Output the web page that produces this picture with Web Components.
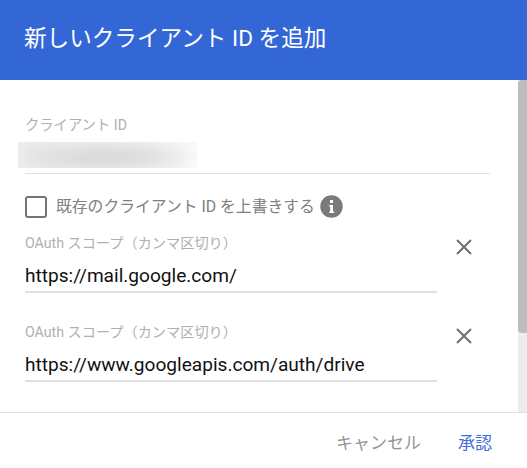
<!DOCTYPE html>
<html lang="ja">
<head>
<meta charset="utf-8">
<title>新しいクライアント ID を追加</title>
<style>
  html, body { margin: 0; height: 100%; background: #fff; }
  body { font-family: Roboto, "Noto Sans CJK JP", sans-serif; overflow: hidden; }
</style>
</head>
<body>
<client-dialog heading="新しいクライアント ID を追加">
  <text-field label="クライアント ID" blurred></text-field>
  <overwrite-check>既存のクライアント ID を上書きする</overwrite-check>
  <scope-row value="https://mail.google.com/"></scope-row>
  <scope-row value="https://www.googleapis.com/auth/drive"></scope-row>
</client-dialog>

<script>
class ClientDialog extends HTMLElement {
  constructor() {
    super();
    this.attachShadow({ mode: 'open' }).innerHTML = `
      <style>
        :host { display: flex; flex-direction: column; width: 527px; height: 468px; }
        header {
          height: 80px;
          flex: none;
          box-sizing: border-box;
          padding: 23px 0 0 24px;
          background: #3367d6;
          color: #fff;
          font-size: 22.6px;
          line-height: 32px;
        }
        .middle { flex: 1; display: flex; min-height: 0; }
        .content { flex: 1; padding: 35px 28px 0 25px; min-width: 0; }
        .track { width: 9px; flex: none; background: #ededed; }
        .thumb { height: 253px; background: #bdbdbd; border-radius: 4px 0 0 4px; }
        footer {
          flex: none;
          height: 56px;
          border-top: 1px solid #e0e0e0;
          display: flex;
          justify-content: flex-end;
          gap: 37px;
          padding: 19px 35px 0 0;
          box-sizing: border-box;
          font-size: 17px;
          line-height: 22px;
        }
        .cancel { color: #949494; }
        .ok { color: #3f6fd8; }
      </style>
      <header></header>
      <div class="middle">
        <div class="content"><slot></slot></div>
        <div class="track"><div class="thumb"></div></div>
      </div>
      <footer>
        <span class="cancel">キャンセル</span>
        <span class="ok">承認</span>
      </footer>`;
  }
  connectedCallback() {
    this.shadowRoot.querySelector('header').textContent = this.getAttribute('heading');
  }
}

class TextField extends HTMLElement {
  constructor() {
    super();
    this.attachShadow({ mode: 'open' }).innerHTML = `
      <style>
        :host { display: block; }
        .label { font-size: 14.3px; line-height: 20px; color: #b0b0b0; }
        .value {
          position: relative;
          height: 26px;
          margin: 7px 0 0 -7px;
          width: 179px;
          overflow: hidden;
          background: linear-gradient(90deg, #ededed, #f1f1f1 70%, #fafafa);
        }
        .smear {
          position: absolute;
          left: 6px; right: 10px; top: 6px; bottom: 2px;
          background: linear-gradient(90deg, #e4e4e4, #d4d4d4 45%, #d8d8d8 70%, #eeeeee);
          border-radius: 10px;
          filter: blur(7px);
        }
        .rule { height: 1px; background: #e0e0e0; margin-top: 5px; }
      </style>
      <div class="label"></div>
      <div class="value"><div class="smear"></div></div>
      <div class="rule"></div>`;
  }
  connectedCallback() {
    this.shadowRoot.querySelector('.label').textContent = this.getAttribute('label');
  }
}

class OverwriteCheck extends HTMLElement {
  constructor() {
    super();
    this.attachShadow({ mode: 'open' }).innerHTML = `
      <style>
        :host {
          display: flex;
          align-items: center;
          margin: 21px 0 16px;
          height: 23px;
          color: #808080;
          font-size: 15.8px;
        }
        .box {
          width: 18px; height: 18px;
          border: 2px solid #757575;
          border-radius: 3px;
          margin-right: 9px;
          flex: none;
        }
        .text { padding-bottom: 2px; }
        svg { display: block; margin-left: 5px; flex: none; }
      </style>
      <span class="box"></span>
      <span class="text"><slot></slot></span>
      <svg width="23" height="23" viewBox="0 0 23 23">
        <circle cx="11.5" cy="11.5" r="11.2" fill="#7a7a7a"/>
        <rect x="10" y="5" width="3" height="3" fill="#fff"/>
        <path d="M9.2 10h3.8v6.4h1.2V18H9.2v-1.6h1V11.6h-1z" fill="#fff"/>
      </svg>`;
  }
}

class ScopeRow extends HTMLElement {
  constructor() {
    super();
    this.attachShadow({ mode: 'open' }).innerHTML = `
      <style>
        :host {
          display: flex;
          align-items: flex-start;
          height: 89px;
        }
        .field { width: 412px; flex: none; }
        .label { font-size: 14.2px; line-height: 18px; color: #b0b0b0; }
        .value {
          font-size: 19.1px;
          line-height: 28px;
          color: #111;
          margin-top: 10px;
          white-space: nowrap;
        }
        .rule { height: 2px; background: #e0e0e0; margin-top: 1px; }
        svg { display: block; margin: 5px 0 0 19px; flex: none; }
      </style>
      <div class="field">
        <div class="label">OAuth スコープ（カンマ区切り）</div>
        <div class="value"></div>
        <div class="rule"></div>
      </div>
      <svg width="16" height="16" viewBox="0 0 16 16">
        <path d="M1 1l14 14M15 1L1 15" stroke="#6f6f6f" stroke-width="2" fill="none"/>
      </svg>`;
  }
  connectedCallback() {
    this.shadowRoot.querySelector('.value').textContent = this.getAttribute('value');
  }
}

customElements.define('client-dialog', ClientDialog);
customElements.define('text-field', TextField);
customElements.define('overwrite-check', OverwriteCheck);
customElements.define('scope-row', ScopeRow);
</script>
</body>
</html>
